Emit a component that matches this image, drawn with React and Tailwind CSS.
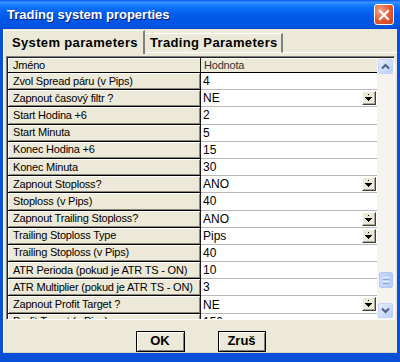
import React from "react";

const rows = [
  ["Zvol Spread páru (v Pips)", "4", false],
  ["Zapnout časový filtr ?", "NE", true],
  ["Start Hodina +6", "2", false],
  ["Start Minuta", "5", false],
  ["Konec Hodina +6", "15", false],
  ["Konec Minuta", "30", false],
  ["Zapnout Stoploss?", "ANO", true],
  ["Stoploss (v Pips)", "40", false],
  ["Zapnout Trailing Stoploss?", "ANO", true],
  ["Trailing Stoploss Type", "Pips", true],
  ["Trailing Stoploss (v Pips)", "40", false],
  ["ATR Perioda (pokud je ATR TS - ON)", "10", false],
  ["ATR Multiplier (pokud je ATR TS - ON)", "3", false],
  ["Zapnout Profit Target ?", "NE", true],
  ["Profit Target (v Pips)", "150", false],
];

function DropBtn() {
  return (
    <div className="absolute right-[1px] top-[1px] w-[14px] h-[14px] bg-[#ece9d8] border-t border-l border-t-white border-l-white border-b border-r border-b-[#404040] border-r-[#404040] shadow-[inset_-1px_-1px_0_#aca899]">
      <svg width="12" height="12" viewBox="0 0 12 12" shapeRendering="crispEdges" className="block">
        <rect x="5" y="2" width="1" height="1" fill="#000" />
        <rect x="2" y="5" width="7" height="1" fill="#000" />
        <rect x="3" y="6" width="5" height="1" fill="#000" />
        <rect x="4" y="7" width="3" height="1" fill="#000" />
        <rect x="5" y="8" width="1" height="1" fill="#000" />
      </svg>
    </div>
  );
}

function Row({ name, value, drop }) {
  return (
    <div className="flex h-[17.2px] shrink-0">
      <div className="w-[193px] shrink-0 bg-[#ece9d8] border-b border-b-black border-r border-r-[#1a1a1a] shadow-[inset_1px_1px_0_#fff,inset_-1px_-1px_0_#8a877a] pl-[5px] flex items-center text-[11px] tracking-[-0.2px] text-black leading-none whitespace-nowrap overflow-hidden">
        {name}
      </div>
      <div className="relative flex-1 bg-white border-b border-b-[#b8b8b8] pl-[2px] flex items-center text-[12px] text-black leading-none">
        {value}
        {drop && <DropBtn />}
      </div>
    </div>
  );
}

function ScrollBtn({ up }) {
  return (
    <div className="w-[15px] h-[15px] mx-auto rounded-[2px] border border-[#c3d3fd] bg-gradient-to-br from-[#e6eefc] to-[#b9cdf7] flex items-center justify-center">
      <svg width="9" height="7" viewBox="0 0 9 7">
        <path
          d={up ? "M1 5.5 L4.5 2 L8 5.5" : "M1 1.5 L4.5 5 L8 1.5"}
          fill="none"
          stroke="#4d6185"
          strokeWidth="2"
        />
      </svg>
    </div>
  );
}

export default function App() {
  return (
    <div
      className="w-[400px] h-[362px] bg-[#0a4fd8] flex flex-col overflow-hidden"
      style={{ fontFamily: '"Liberation Sans", Arial, sans-serif' }}
    >
      {/* Title bar */}
      <div className="h-[29px] shrink-0 flex items-center justify-between pl-[7px] pr-[6px] bg-[linear-gradient(to_bottom,#0058ee_0%,#3a93ff_8%,#1e84ff_14%,#0a6ffa_28%,#0460ee_45%,#0057e5_70%,#0054e3_90%,#0049d0_100%)]">
        <span className="text-white font-bold text-[13px] [text-shadow:1px_1px_0_#0a1e7a]">
          Trading system properties
        </span>
        <div className="w-[20px] h-[21px] rounded-[3px] border border-white bg-[radial-gradient(circle_at_30%_30%,#f0a58a,#e2582f_55%,#c8401c)] flex items-center justify-center">
          <svg width="12" height="12" viewBox="0 0 12 12">
            <path d="M2 2 L10 10 M10 2 L2 10" stroke="#fff" strokeWidth="2.2" strokeLinecap="square" />
          </svg>
        </div>
      </div>

      {/* Body */}
      <div className="flex-1 mx-[3px] mb-[9px] bg-[#ece9d8] flex flex-col border-b border-b-[#d6d3c4]">
        {/* Tabs */}
        <div className="h-[24px] shrink-0 flex items-end relative">
          <div className="relative z-10 h-[24px] w-[142px] border-t border-l border-t-white border-l-white border-r-2 border-r-[#808080] bg-[#ece9d8] flex items-center pl-[8px] text-[13px] tracking-[0.35px] font-bold text-black mb-[-1px]">
            System parameters
          </div>
          <div className="h-[20px] w-[138px] border-t border-t-white border-r-2 border-r-[#808080] bg-[#ece9d8] flex items-center pl-[5px] text-[13px] tracking-[0.35px] font-bold text-black border-b border-b-white">
            Trading Parameters
          </div>
          <div className="flex-1 border-b border-b-white" />
        </div>

        {/* Grid panel */}
        <div className="flex-1 flex flex-col px-[2px] pt-[3px] border-l border-l-white">
          <div className="h-[264px] shrink-0 flex border border-t-[#808080] border-l-[#808080] border-b-white border-r-white">
            <div className="flex-1 flex flex-col overflow-hidden border-l border-l-[#222] border-t border-t-[#222]">
              {/* Header */}
              <div className="flex h-[15px] shrink-0">
                <div className="w-[193px] shrink-0 bg-[#ece9d8] border-b border-b-black border-r border-r-[#1a1a1a] shadow-[inset_1px_1px_0_#fff] pl-[5px] flex items-center text-[11px] tracking-[-0.2px] text-black leading-none">
                  Jméno
                </div>
                <div className="flex-1 bg-[#ece9d8] border-b border-b-black shadow-[inset_0_1px_0_#fff] pl-[3px] flex items-center text-[11px] tracking-[-0.2px] text-[#333] leading-none">
                  Hodnota
                </div>
              </div>
              {rows.map((r, i) => (
                <Row key={i} name={r[0]} value={r[1]} drop={r[2]} />
              ))}
            </div>
            {/* Scrollbar */}
            <div className="w-[17px] shrink-0 bg-[#f4f3ee] flex flex-col pt-[1px] pb-[1px] border-t border-t-[#222]">
              <ScrollBtn up />
              <div className="flex-1 flex flex-col justify-end pb-[15px]">
                <div className="w-[14px] h-[16px] mx-auto rounded-[2px] border border-[#b4c8f6] bg-gradient-to-r from-[#cad9fc] to-[#b7cbf5] flex flex-col items-center justify-center gap-[1px]">
                  <div className="w-[6px] h-[1px] bg-[#eef3ff]" />
                  <div className="w-[6px] h-[1px] bg-[#8ca6dc]" />
                  <div className="w-[6px] h-[1px] bg-[#eef3ff]" />
                  <div className="w-[6px] h-[1px] bg-[#8ca6dc]" />
                </div>
              </div>
              <ScrollBtn />
            </div>
          </div>

          {/* Buttons */}
          <div className="flex-1 flex items-center justify-center gap-[33px] pt-[10px]">
            <div className="w-[49px] h-[21px] border border-black bg-[#ece9d8] shadow-[inset_1px_1px_0_#fff,inset_-1px_-1px_0_#808080] flex items-center justify-center text-[13px] font-bold text-black">
              OK
            </div>
            <div className="w-[48px] h-[21px] border border-black bg-[#ece9d8] shadow-[inset_1px_1px_0_#fff,inset_-1px_-1px_0_#808080] flex items-center justify-center text-[13px] font-bold text-black">
              Zruš
            </div>
          </div>
        </div>
      </div>
    </div>
  );
}
